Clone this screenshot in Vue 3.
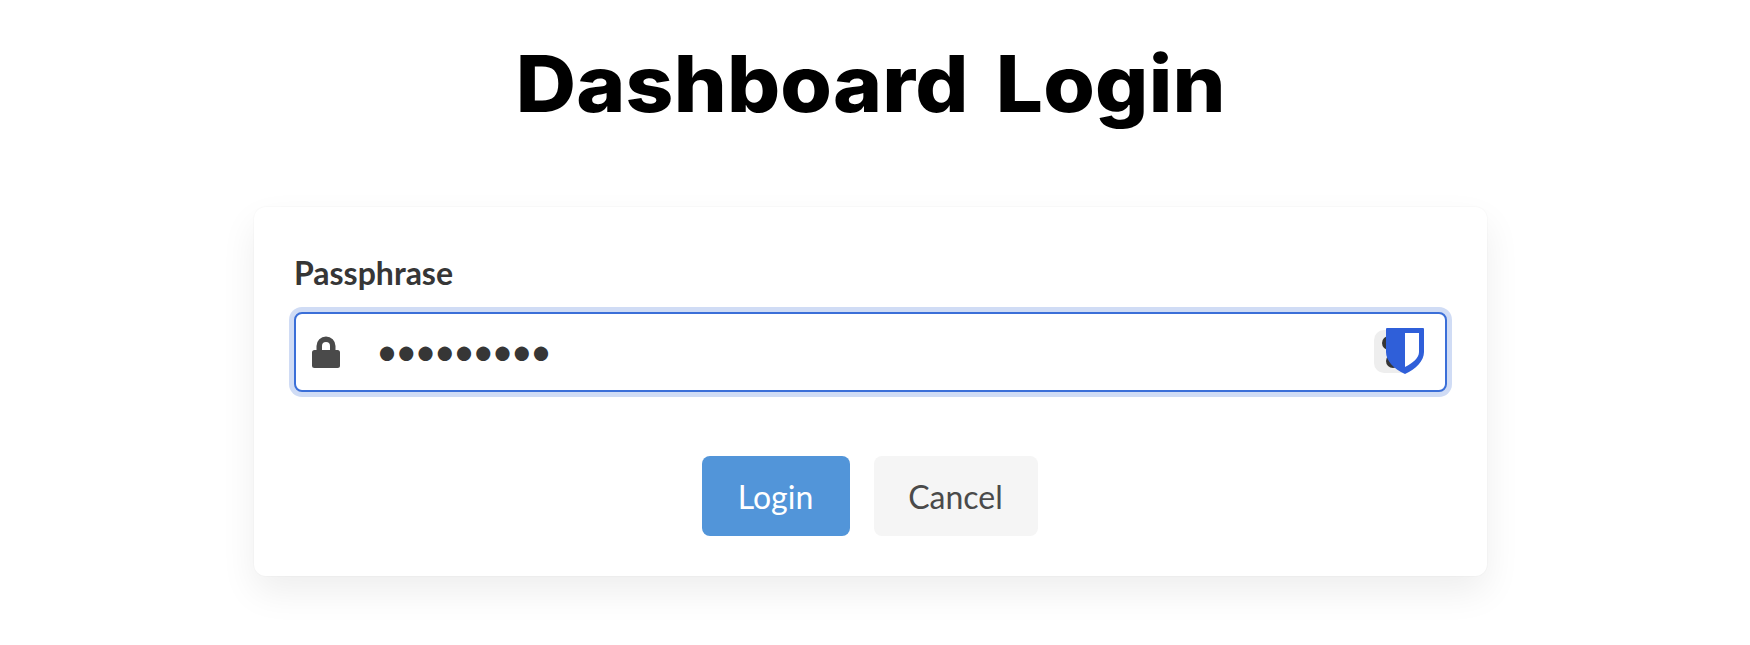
<template>
  <div class="page">
    <h1 class="title">Dashboard Login</h1>
    <form class="card" @submit.prevent>
      <label class="label" for="passphrase">Passphrase</label>
      <div class="control">
        <svg class="lock" viewBox="0 0 28 32" aria-hidden="true">
          <path d="M4.500 15V10a9.500 9.500 0 0 1 19 0v5h-5.500v-5a4 4 0 0 0-8 0v5z" fill="#4a4a4a" />
          <rect x="0" y="14" width="28" height="18" rx="2.500" fill="#4a4a4a" />
        </svg>
        <input id="passphrase" v-model="passphrase" class="input" type="password" />
        <div class="manager">
          <span class="badge"></span>
          <span class="dot dot-top"></span>
          <span class="dot dot-bottom"></span>
          <svg class="shield" viewBox="0 0 38 46" aria-hidden="true">
            <path d="M19 5v34c8-4 14-9 14-15V5z" fill="#fff" />
            <path fill-rule="evenodd" d="M1 0h36a1 1 0 0 1 1 1v23c0 9-8 17-19 22C8 41 0 33 0 24V1a1 1 0 0 1 1-1zM19 5v34c8-4 14-9 14-15V5z" fill="#2f5fd9" />
          </svg>
        </div>
      </div>
      <div class="actions">
        <button class="btn btn-primary" type="submit">Login</button>
        <button class="btn btn-light" type="button">Cancel</button>
      </div>
    </form>
  </div>
</template>

<script setup>
import { ref } from 'vue'

const passphrase = ref('secret123')
</script>

<style>
html, body {
  background: #fff;
  overflow: hidden;
}
</style>

<style scoped>
.page {
  width: 1741px;
  height: 645px;
  display: flex;
  flex-direction: column;
  align-items: center;
  font-family: Lato, "Liberation Sans", sans-serif;
  color: #363636;
}
.title {
  margin: 36px 0 0;
  height: 171px;
  font-family: Inter, "Liberation Sans", sans-serif;
  font-size: 78px;
  line-height: 96px;
  font-weight: 800;
  letter-spacing: 0.200px;
  word-spacing: 8px;
  color: #000;
  white-space: nowrap;
  transform: scaleX(1.07);
}
.card {
  box-sizing: border-box;
  width: 1233px;
  height: 369px;
  padding: 40px;
  background: #fff;
  border-radius: 12px;
  box-shadow: 0 0 0 1px rgba(0, 0, 0, 0.015), 0 16px 36px rgba(0, 0, 0, 0.07);
}
.label {
  display: block;
  height: 65px;
  font-size: 32px;
  line-height: 52px;
  font-weight: 700;
  color: #363636;
}
.control {
  position: relative;
  height: 80px;
}
.input {
  box-sizing: border-box;
  display: block;
  width: 100%;
  height: 80px;
  padding: 0 60px 4px 80px;
  border: 2px solid #3b6fd8;
  border-radius: 8px;
  outline: none;
  box-shadow: 0 0 0 5px #d0dcf5;
  font-family: Lato, sans-serif;
  font-size: 38px;
  letter-spacing: -2.800px;
  color: #363636;
  background: #fff;
}
.lock {
  position: absolute;
  left: 18px;
  top: 24px;
  width: 28px;
  height: 32px;
  z-index: 1;
}
.manager {
  position: absolute;
  left: 1080px;
  top: 16px;
  width: 50px;
  height: 46px;
}
.badge {
  position: absolute;
  left: 0;
  top: 2px;
  width: 40px;
  height: 43px;
  border-radius: 10px;
  background: #eeeeee;
}
.dot {
  position: absolute;
  width: 14px;
  height: 14px;
  border-radius: 50%;
  background: #363636;
}
.dot-top {
  left: 8px;
  top: 8px;
}
.dot-bottom {
  left: 12px;
  top: 26px;
}
.shield {
  position: absolute;
  left: 12px;
  top: 0;
  width: 38px;
  height: 46px;
}
.actions {
  display: flex;
  justify-content: center;
  gap: 24px;
  margin-top: 64px;
  padding-right: 2px;
}
.btn {
  height: 80px;
  padding: 0;
  border: none;
  border-radius: 8px;
  font-family: Lato, sans-serif;
  font-size: 32px;
}
.btn-primary {
  width: 148px;
  background: #5295d9;
  color: #fff;
}
.btn-light {
  width: 164px;
  background: #f5f5f5;
  color: #4a4a4a;
}
</style>
